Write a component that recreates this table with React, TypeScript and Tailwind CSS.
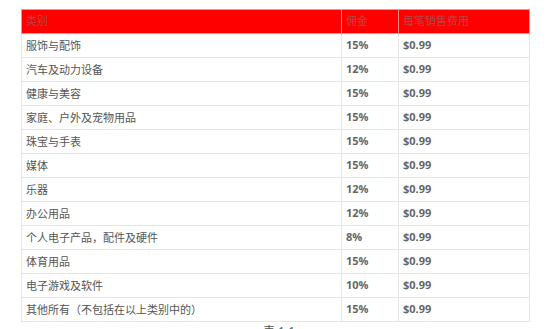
import React from "react";

const rows: [string, string][] = [
  ["服饰与配饰", "15%"],
  ["汽车及动力设备", "12%"],
  ["健康与美容", "15%"],
  ["家庭、户外及宠物用品", "15%"],
  ["珠宝与手表", "15%"],
  ["媒体", "15%"],
  ["乐器", "12%"],
  ["办公用品", "12%"],
  ["个人电子产品，配件及硬件", "8%"],
  ["体育用品", "15%"],
  ["电子游戏及软件", "10%"],
  ["其他所有（不包括在以上类别中的）", "15%"],
];

export default function App() {
  return (
    <div
      className="w-[554px] h-[329px] bg-white overflow-hidden pt-[9px] pl-[21px]"
      style={{ fontFamily: '"Open Sans", "Noto Sans CJK SC", sans-serif' }}
    >
      <table className="border-collapse w-[508px] table-fixed text-[11px] text-[#555]">
        <colgroup>
          <col className="w-[320px]" />
          <col className="w-[57px]" />
          <col className="w-[131px]" />
        </colgroup>
        <thead>
          <tr className="h-[24px] bg-[#ff0000] text-[#b5474a]">
            <th className="border border-[#ff8f8f] text-left font-normal pl-[4px]">类别</th>
            <th className="border border-[#ff8f8f] text-left font-normal pl-[4px]">佣金</th>
            <th className="border border-[#ff8f8f] text-left font-normal pl-[4px]">每笔销售费用</th>
          </tr>
        </thead>
        <tbody>
          {rows.map(([name, pct]) => (
            <tr key={name} className="h-[24px]">
              <td className="border border-[#e6e6e6] pl-[4px] leading-none">{name}</td>
              <td className="border border-[#e6e6e6] pl-[4px] font-bold text-[#666]">{pct}</td>
              <td className="border border-[#e6e6e6] pl-[4px] font-bold text-[#666]">$0.99</td>
            </tr>
          ))}
        </tbody>
      </table>
      <div className="w-[508px] text-center text-[12px] text-[#555] mt-[1px] pl-[8px]">表 1.1</div>
    </div>
  );
}
